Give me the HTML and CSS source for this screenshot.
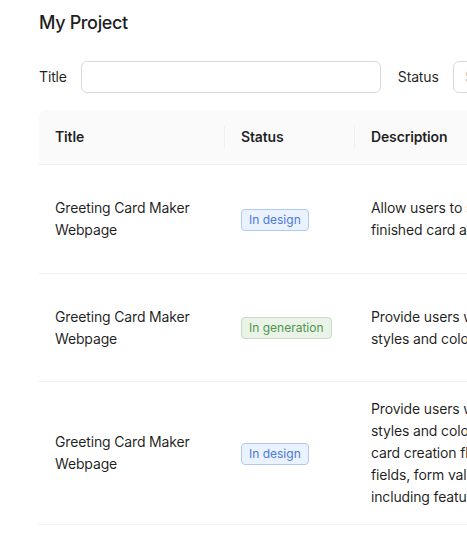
FILE: index.html
```html
<!DOCTYPE html>
<html lang="en">
<head>
<meta charset="utf-8">
<title>My Project</title>
<link rel="stylesheet" href="styles.css">
</head>
<body>
<div class="page">
  <h1 class="page-title">My Project</h1>
  <div class="filters">
    <label class="filter-label">Title</label>
    <input class="filter-input" type="text">
    <label class="filter-label status-label">Status</label>
    <div class="filter-select"><span class="placeholder">Select status</span></div>
  </div>
  <table class="table">
    <colgroup>
      <col class="col-title">
      <col class="col-status">
      <col class="col-desc">
    </colgroup>
    <thead>
      <tr>
        <th class="sep">Title</th>
        <th class="sep">Status</th>
        <th>Description</th>
      </tr>
    </thead>
    <tbody>
      <tr class="row-first">
        <td>Greeting Card Maker Webpage</td>
        <td><span class="tag tag-blue">In design</span></td>
        <td class="desc">Allow users to save their designs and download the<br>finished card as a high-quality image file.</td>
      </tr>
      <tr class="row-second">
        <td>Greeting Card Maker Webpage</td>
        <td><span class="tag tag-green">In generation</span></td>
        <td class="desc">Provide users with a wide range of templates, font<br>styles and colors to personalize their cards.</td>
      </tr>
      <tr>
        <td>Greeting Card Maker Webpage</td>
        <td><span class="tag tag-blue">In design</span></td>
        <td class="desc">Provide users with a wide range of templates, font<br>styles and colors, and build a complete step-by-step<br>card creation flow with input fields, text<br>fields, form validation and a live preview area,<br>including features such as undo and redo.</td>
      </tr>
    </tbody>
  </table>
</div>
</body>
</html>
```

FILE: styles.css
```css
html, body {
  margin: 0;
  padding: 0;
  overflow: hidden;
  background: #ffffff;
}
body {
  font-family: Inter, "Noto Sans", "Liberation Sans", sans-serif;
  font-size: 14px;
  line-height: 22px;
  letter-spacing: -0.15px;
  color: rgba(0, 0, 0, 0.88);
}
.page {
  padding: 9px 0 0 39px;
  width: 900px;
}
.page-title {
  margin: 0;
  font-size: 18px;
  line-height: 28px;
  font-weight: 500;
  letter-spacing: -0.35px;
  color: #1f1f1f;
}
.filters {
  display: flex;
  align-items: center;
  margin-top: 24px;
  height: 32px;
}
.filter-label {
  font-size: 14px;
  color: rgba(0, 0, 0, 0.88);
  margin-right: 14px;
}
.status-label {
  margin-left: 17px;
}
.filter-input {
  box-sizing: border-box;
  width: 300px;
  height: 32px;
  border: 1px solid #d9d9d9;
  border-radius: 6px;
  padding: 4px 11px;
  font: inherit;
  outline: none;
  background: #fff;
}
.filter-select {
  box-sizing: border-box;
  width: 200px;
  height: 32px;
  border: 1px solid #d9d9d9;
  border-radius: 6px;
  padding: 4px 11px;
  display: flex;
  align-items: center;
}
.placeholder {
  color: #bfbfbf;
}
.table {
  margin-top: 17px;
  border-collapse: separate;
  border-spacing: 0;
  table-layout: fixed;
  width: 820px;
}
.col-title { width: 186px; }
.col-status { width: 130px; }
.col-desc { width: 504px; }
.table th {
  position: relative;
  background: #fafafa;
  text-align: left;
  font-weight: 600;
  padding: 16px;
  border-bottom: 1px solid #f0f0f0;
  color: rgba(0, 0, 0, 0.88);
}
.table th:first-child {
  border-top-left-radius: 8px;
}
.table th.sep::after {
  content: "";
  position: absolute;
  right: 0;
  top: 50%;
  width: 1px;
  height: 22px;
  transform: translateY(-50%);
  background: #f0f0f0;
}
.table td {
  padding: 16px;
  border-bottom: 1px solid #f0f0f0;
  vertical-align: middle;
}
.row-first td {
  height: 76px;
}
.row-second td {
  height: 75px;
}
.desc {
  white-space: nowrap;
  overflow: hidden;
}
.tag {
  display: inline-block;
  font-size: 12px;
  line-height: 20px;
  padding: 0 7px;
  border-radius: 4px;
  border: 1px solid;
  white-space: nowrap;
  letter-spacing: 0;
}
.tag-blue {
  color: #4a78d6;
  background: #eaf2fe;
  border-color: #aecaf5;
}
.tag-green {
  color: #4f944f;
  background: #eaf3e7;
  border-color: #c7dcc3;
}
```
